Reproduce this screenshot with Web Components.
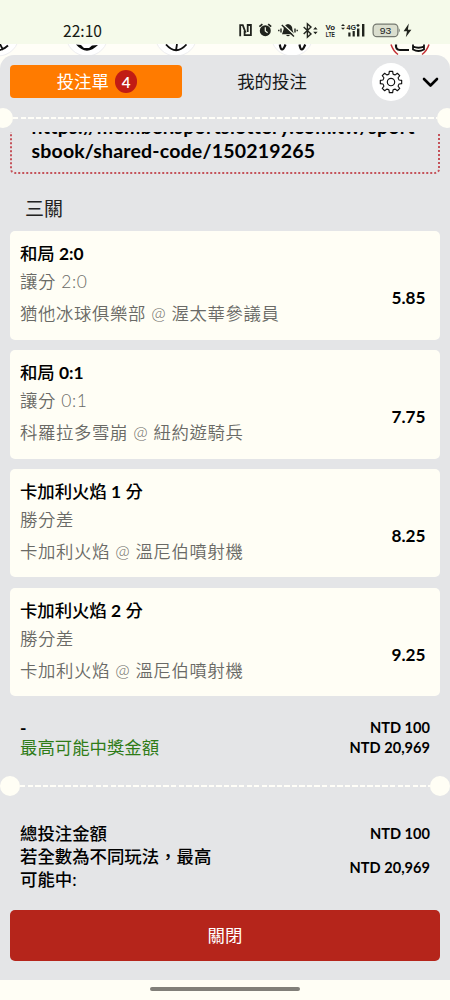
<!DOCTYPE html>
<html lang="zh-Hant">
<head>
<meta charset="utf-8">
<meta name="viewport" content="width=device-width, initial-scale=1">
<title>投注單</title>
<style>
html,body{margin:0;height:100%;overflow:hidden}
body{background:#fffef5;color:#000;font-family:Lato,"Noto Sans CJK TC",sans-serif;font-size:17.4px}
</style>
</head>
<body>
<bet-app></bet-app>
<script>
function define(name, html){
  const t=document.createElement('template');
  t.innerHTML=html;
  customElements.define(name, class extends HTMLElement{
    constructor(){super();this.attachShadow({mode:'open'}).append(t.content.cloneNode(true));}
  });
}

define('status-bar',`<style>
:host{display:flex;height:44px;box-sizing:border-box;padding:17px 0 0 63px;background:#f5faea;color:#171a14}
time{font-family:"Noto Sans CJK TC",sans-serif;font-size:15.6px;line-height:26px;height:27px;width:175px}
svg{display:block;width:176px;height:27px}
text{font-family:"Liberation Sans",sans-serif}
</style><time>22:10</time>
<svg viewBox="238 17 176 27" fill="#20231d">
<path d="M240.200 36.200V25.200h2.600l2.800 7.500M244.600 29.500v5.700h6.300V25h-3.200v7" stroke="#20231d" stroke-width="1.800" fill="none"/>
<circle cx="265.300" cy="30.700" r="5.500"/><path d="M259.400 26.600l3-2.500M271.200 26.600l-3-2.500" stroke="#20231d" stroke-width="1.700"/><path d="M265.300 27.300v3.600l2.300 1.800" stroke="#f5faea" stroke-width="1.200" fill="none"/>
<path d="M288 24c-3.300.7-4.400 2.800-4.400 5.500l-1.600 4.800h12l-1.600-4.800c0-2.700-1.100-4.800-4.400-5.500zM286 35h4q-2 2.500-4 0z"/>
<path d="M283.200 24.500l11.800 11" stroke="#f5faea" stroke-width="1.500"/><path d="M281.800 25l12.200 11.500M281 28.600v4M278.800 29.800v1.500M295 28.600v4M297.200 29.800v1.500" stroke="#20231d" stroke-width="1.400"/>
<path d="M303.700 27l7.300 7-3.600 3.200V23.800l3.600 3.300-7.300 7" stroke="#20231d" stroke-width="1.400" fill="none"/><path d="M313.200 29.600l2.200-2.600 2.200 2.600zM313.200 31.700l2.200 2.600 2.200-2.600z"/>
<text x="325.600" y="29.800" font-size="8" font-weight="700" textLength="9.500" lengthAdjust="spacingAndGlyphs">Vo</text><text x="325.800" y="36.700" font-size="8" font-weight="700" textLength="9.200" lengthAdjust="spacingAndGlyphs">LTE</text>
<path d="M341 26l2-2.100 2 2.100zM341 27.700l2 2.100 2-2.100z"/><text x="346.500" y="29.700" font-size="7.800" font-weight="700" textLength="9.500" lengthAdjust="spacingAndGlyphs">4G</text><path d="M356.500 24.800h3v1.200h-3zM357.400 23.900h1.200v3h-1.200zM348.300 32.500h2.200V36.500h-2.200zM352.600 31h2.200v5.500h-2.200zM357 28.500h2.400V36.500H357zM362 24h2.400v12.500h-2.400z"/>
<rect x="373.100" y="24.200" width="24.800" height="12.400" rx="3.700" fill="#dadece" stroke="#74786f" stroke-width="1.200"/><path d="M398.800 28.200q2 2.200 0 4.500z" fill="#74786f"/><text x="379.700" y="34" font-size="9.800" textLength="11.500" lengthAdjust="spacingAndGlyphs">93</text>
<path d="M408.800 23.500l-5.200 7.700h3.400l-1.200 6 5.600-7.500h-3.500z"/>
</svg>`);

define('sport-strip',`<style>
:host{display:block;height:26px;margin-bottom:-15px;background:#fffef7}svg{display:block}
</style><svg width="450" height="26" viewBox="0 44 450 26"><g fill="#fff" stroke="#eeeef0" stroke-width="1"><circle cx="-2" cy="35" r="21"/><circle cx="87" cy="35" r="21"/><circle cx="176" cy="35" r="21"/><circle cx="292" cy="35" r="21"/></g>
<g fill="none" stroke="#101010" stroke-width="1.800"><path d="M-4 50.500q7 0 12-5M0 44l3 6M166 44.500q10 11.500 20.500 0M177 44l-1 6.500"/><path d="M279.800 44.500q.8 5 2.300 5t3.400-5M299.500 44.500q.8 5 2.300 5t3.400-5" stroke-width="2.200"/><path d="M396 44.500q-.5 5.500 4 5.500h9" stroke-width="2.200"/><path d="M413 44.500v5q5.500 3 11 0v-5M413 46.500q5.500 2.500 11 0"/></g><path d="M76 44.500q10.500 12 22 .5l-6 .5-3 2.500h-5l-3-3z" fill="#090909"/><path d="M391 44.500q2.500 7 7 10M429 44.500q-2.500 7-7 10" fill="none" stroke="#c43036" stroke-width="1.500"/>
</svg>`);

define('bet-tabs',`<style>
:host{display:grid;grid-template-columns:172px 180px 59px 20px;height:53px;align-items:center;padding:0 0 0 10px}
.on{height:33px;border-radius:4px;background:#ff7b00;color:#fff;display:flex;align-items:center;justify-content:center;gap:6px;padding-left:2px;box-sizing:border-box}
.on span,.off{position:relative;top:-1px}
b{width:22.500px;height:22.500px;border-radius:50%;background:#c11c14;display:grid;place-items:center;font-size:15.200px;line-height:22px;font-weight:600}
.off{text-align:center;color:#161719}
i{width:38px;height:38px;border-radius:50%;background:#fff;display:grid;place-items:center;margin-left:10px}
svg{display:block}
</style><div class="on"><span>投注單</span><b>4</b></div><div class="off">我的投注</div>
<i><svg width="24" height="24" viewBox="-12 -12 24 24" fill="none" stroke="#111" stroke-width="1.150" stroke-linejoin="round"><circle r="3.700"/><path id="g"/></svg></i>
<svg width="18" height="14" viewBox="0 0 18 14" fill="none" stroke="#000" stroke-width="2.600" stroke-linecap="round" stroke-linejoin="round"><path d="M3 4l6.500 6.500L16 4"/></svg>`);

define('ticket-edge',`<style>
:host{display:flex;align-items:center;height:20px;margin:0 var(--out,0px)}
i{width:20px;height:20px;flex:none;border-radius:50%;background:#fffef5}
span{flex:1;height:2.500px;background:repeating-linear-gradient(90deg,#fffef8 0 5.400px,#e4e5e7 5.400px 7.550px)}
</style><i></i><span></span><i></i>`);

define('share-link',`<style>
:host{display:flex;flex-direction:column;justify-content:flex-end;height:42px;overflow:hidden;padding:0 10px}
div{border:2px dotted #c4525a;border-radius:5px;padding:10px 20px 9px 19.500px;font-size:19.500px;line-height:24px;font-weight:700}
span{display:block;white-space:nowrap}
.a{letter-spacing:.27px}.b{letter-spacing:.18px}
</style><div><span class="a"><slot name="a"></slot></span><span class="b"><slot name="b"></slot></span></div>`);

define('bet-card',`<style>
:host{display:flex;align-items:center;justify-content:space-between;height:108.600px;box-sizing:border-box;padding:1px 14.500px 0 10px;border-radius:5px;background:#fffef5}
.t{line-height:28px;font-weight:500;font-size:17.400px;letter-spacing:-.05px}
.s,.m{line-height:28px;color:#6a6a66;font-weight:350;letter-spacing:.6px}
.m{line-height:36px}
.o{font-weight:700;font-size:17.200px;margin-top:24px;line-height:26px}
</style><div><div class="t"><slot name="pick"></slot></div><div class="s"><slot name="market"></slot></div><div class="m"><slot name="match"></slot></div></div><div class="o"><slot name="odds"></slot></div>`);

define('sum-row',`<style>
:host{display:flex;justify-content:space-between;align-items:center;padding:0 20px;line-height:var(--lh,20px)}
.l{max-width:200px;font-weight:var(--fw,500)}
.r{font-size:14.600px;font-weight:700;white-space:nowrap}
</style><div class="l"><slot></slot></div><div class="r"><slot name="value"></slot></div>`);

define('close-button',`<style>
:host{display:block;padding:0 10px}
button{display:block;width:100%;height:51px;border:0;border-radius:5px;background:#b5251b;color:#fff;font:inherit;font-size:17.400px;padding:0 0 2px}
</style><button><slot></slot></button>`);

const legs=[['和局 2:0','讓分 2:0','猶他冰球俱樂部 @ 渥太華參議員','5.85'],['和局 0:1','讓分 0:1','科羅拉多雪崩 @ 紐約遊騎兵','7.75'],['卡加利火焰 1 分','勝分差','卡加利火焰 @ 溫尼伯噴射機','8.25'],['卡加利火焰 2 分','勝分差','卡加利火焰 @ 溫尼伯噴射機','9.25']];
const cards=legs.map(l=>'<bet-card><span slot="pick">'+l[0].replace(/[\d:]+/,'<b>$&</b>')+'</span><span slot="market">'+l[1]+'</span><span slot="match">'+l[2]+'</span><span slot="odds">'+l[3]+'</span></bet-card>').join('');

define('bet-app',`<style>
:host{display:block;width:450px;height:1000px;overflow:hidden;background:#fffef5}
main{position:relative;height:925px;background:#e4e5e7;border-radius:14px 14px 0 0;overflow:hidden}
ticket-edge.top{--out:-7px}
h2{margin:0;padding:21px 0 0 25px;height:36.200px;font-size:19px;line-height:27px;font-weight:400;color:#222}
.cards{display:grid;gap:10.250px;padding:0 10px}
.cards b{font-weight:700}
.totals{padding-top:22px;height:57.500px}
.green{color:#2f7c18;--fw:400}.green [slot]{color:#000}
.all{padding-top:26px;height:88px}
footer{display:flex;justify-content:center;padding-top:7px}
footer i{width:150px;height:4px;border-radius:2px;background:#817f79}
</style><status-bar></status-bar><sport-strip></sport-strip>
<main><bet-tabs></bet-tabs><ticket-edge class="top"></ticket-edge>
<share-link style="margin-top:4px"><span slot="a">https://member.sportslottery.com.tw/sport</span><span slot="b">sbook/shared-code/150219265</span></share-link>
<h2>三關</h2><section class="cards">${cards}</section>
<section class="totals"><sum-row style="--fw:700">-<span slot="value">NTD 100</span></sum-row><sum-row class="green">最高可能中獎金額<span slot="value">NTD 20,969</span></sum-row></section>
<ticket-edge></ticket-edge>
<section class="all"><sum-row style="--lh:23px">總投注金額<span slot="value">NTD 100</span></sum-row><sum-row style="--lh:23px">若全數為不同玩法，最高可能中:<span slot="value">NTD 20,969</span></sum-row></section>
<close-button>關閉</close-button></main>
<footer><i></i></footer>`);

const tabs=document.querySelector('bet-app').shadowRoot.querySelector('bet-tabs').shadowRoot;
let d='';
for(let k=0;k<8;k++){
  const p=(r,a)=>{a=(a+k*45)*Math.PI/180;return (r*Math.sin(a)).toFixed(2)+' '+(-r*Math.cos(a)).toFixed(2)};
  d+=(k?'L':'M')+p(8.300,-14)+'L'+p(10.800,-9)+'L'+p(10.800,9)+'L'+p(8.300,14)+'Q'+p(7.900,22.500)+' '+p(8.300,31);
}
tabs.querySelector('#g').setAttribute('d',d+'Z');
</script>
</body>
</html>
